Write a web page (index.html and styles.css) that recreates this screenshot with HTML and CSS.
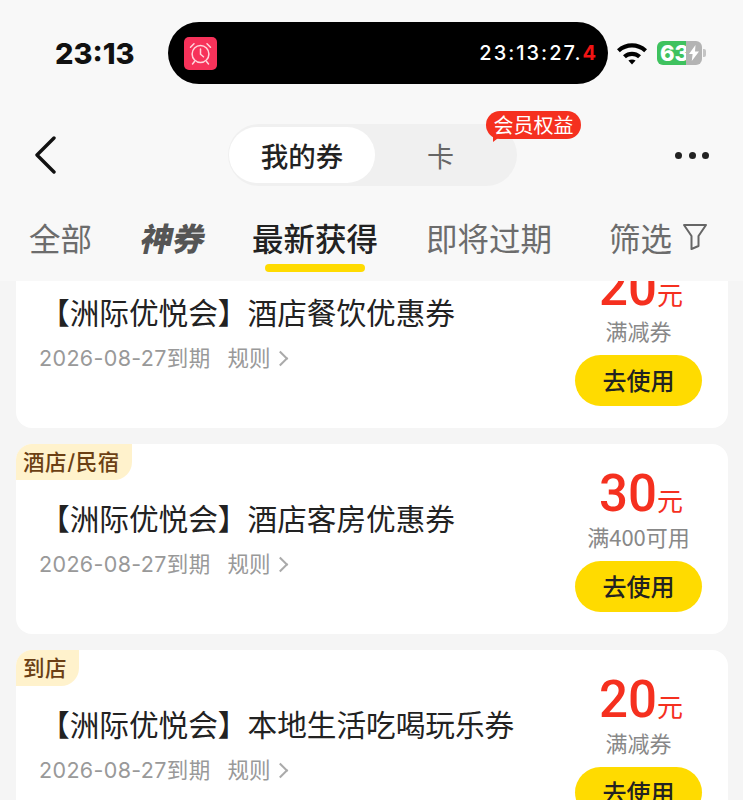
FILE: index.html
```html
<!DOCTYPE html>
<html lang="zh-CN">
<head>
  <meta charset="UTF-8" />
  <meta name="viewport" content="width=device-width, initial-scale=1" />
  <title>我的券</title>
  <link rel="stylesheet" href="styles.css">
</head>
<body>
  <div class="screen">
    <header class="top">
      <div class="status">
        <span class="status-time">23:13</span>
        <div class="island">
          <span class="alarm">
            <svg width="25" height="25" viewBox="0 0 25 25" fill="none" stroke="#ffd5dc" stroke-width="1.5" stroke-linecap="round">
              <circle cx="12.5" cy="13" r="8.4"/>
              <path d="M12.5 8v5.2l3 2.6"/>
              <path d="M2.5 6.2 6 2.8M22.5 6.2 19 2.8M6.5 20.5l-2 2.5M18.5 20.5l2 2.5"/>
            </svg>
          </span>
          <span class="island-time">23:13:27.<b>4</b></span>
        </div>
        <svg class="wifi" width="32" height="24" viewBox="0 0 32 24">
          <path d="M1 8.2C9.6.4 22.4.4 31 8.2l-2.8 3C21 5 11 5 3.8 11.2z" fill="#000"/>
          <path d="M7 14.2c5.4-4.6 12.6-4.6 18 0l-2.9 3c-3.8-3-8.4-3-12.2 0z" fill="#000"/>
          <path d="M12.4 19.6c2.2-1.6 5-1.6 7.2 0L16 23.4z" fill="#000"/>
        </svg>
        <div class="battery">
          <span class="battery-level">63</span>
          <span class="battery-rest">
            <svg width="10" height="16" viewBox="0 0 10 16"><path d="M6.5 0 0 9h3.6L2.8 16 10 6.4H6z" fill="#fff"/></svg>
          </span>
          <span class="battery-cap"></span>
        </div>
      </div>

      <nav class="nav">
        <svg class="back" width="26" height="38" viewBox="0 0 26 38" fill="none" stroke="#111" stroke-width="3.4" stroke-linecap="round" stroke-linejoin="round">
          <path d="M21 2 4 19l17 17"/>
        </svg>
        <div class="switch">
          <span class="switch-item active">我的券</span>
          <span class="switch-item">卡</span>
          <span class="perk">会员权益</span>
        </div>
        <div class="more"><i></i><i></i><i></i></div>
      </nav>

      <div class="tabs">
        <span class="tab">全部</span>
        <span class="tab special">神券</span>
        <span class="tab current">最新获得</span>
        <span class="tab">即将过期</span>
        <span class="tab filter">筛选
          <svg width="26" height="28" viewBox="0 0 26 28" fill="none" stroke="#666" stroke-width="2" stroke-linejoin="round">
            <path d="M2 2h22l-7.5 11v10l-7 3V13z"/>
          </svg>
        </span>
      </div>
    </header>

    <main class="list">
      <div class="cards">
        <section class="card">
          <div class="info">
            <h3>【洲际优悦会】酒店餐饮优惠券</h3>
            <p class="meta"><span>2026-08-27到期</span><span>规则</span><i class="chevron"></i></p>
          </div>
          <div class="side">
            <div class="amount">20<small>元</small></div>
            <div class="cond">满减券</div>
            <a class="use">去使用</a>
          </div>
        </section>

        <section class="card">
          <span class="tag">酒店/民宿</span>
          <div class="info">
            <h3>【洲际优悦会】酒店客房优惠券</h3>
            <p class="meta"><span>2026-08-27到期</span><span>规则</span><i class="chevron"></i></p>
          </div>
          <div class="side">
            <div class="amount">30<small>元</small></div>
            <div class="cond">满400可用</div>
            <a class="use">去使用</a>
          </div>
        </section>

        <section class="card">
          <span class="tag">到店</span>
          <div class="info">
            <h3>【洲际优悦会】本地生活吃喝玩乐券</h3>
            <p class="meta"><span>2026-08-27到期</span><span>规则</span><i class="chevron"></i></p>
          </div>
          <div class="side">
            <div class="amount">20<small>元</small></div>
            <div class="cond">满减券</div>
            <a class="use">去使用</a>
          </div>
        </section>
      </div>
    </main>
  </div>
</body>
</html>
```

FILE: styles.css
```css
* {
  box-sizing: border-box;
}

html, body {
  margin: 0;
  padding: 0;
}

body {
  font-family: "Noto Sans CJK SC", "Noto Sans", sans-serif;
  background: #f5f5f5;
  color: #222;
}

.screen {
  width: 743px;
  height: 800px;
  overflow: hidden;
  display: flex;
  flex-direction: column;
}

.top {
  height: 281px;
  flex: none;
  padding-top: 22px;
  background: #f8f8f8;
}

/* status bar */
.status {
  display: flex;
  align-items: center;
  height: 62px;
  padding-left: 55px;
}

.status-time {
  width: 113px;
  font: 800 29px Inter, sans-serif;
  color: #111;
}

.island {
  width: 440px;
  height: 62px;
  background: #000;
  border-radius: 31px;
  display: flex;
  align-items: center;
  justify-content: space-between;
  padding: 0 10px 0 16px;
}

.alarm {
  width: 33px;
  height: 33px;
  background: #f7325a;
  border-radius: 5px;
  display: flex;
  align-items: center;
  justify-content: center;
}

.island-time {
  font: 500 20px Inter, sans-serif;
  letter-spacing: 2px;
  color: #fff;
}

.island-time b {
  color: #f01414;
  font-weight: 700;
}

.wifi {
  margin-left: 8px;
}

.battery {
  display: flex;
  align-items: center;
  margin-left: 9px;
}

.battery-level {
  width: 29px;
  height: 24px;
  background: #3fc25f;
  border-radius: 6px 0 0 6px;
  color: #fff;
  font: 800 22px/24px Inter, sans-serif;
  padding-left: 3px;
  white-space: nowrap;
}

.battery-rest {
  width: 16px;
  height: 24px;
  background: #b4b4b4;
  border-radius: 0 6px 6px 0;
  display: flex;
  align-items: center;
  justify-content: center;
}

.battery-cap {
  width: 3px;
  height: 8px;
  margin-left: 1px;
  background: #c4c4c4;
  border-radius: 0 2px 2px 0;
}

/* nav */
.nav {
  display: flex;
  align-items: center;
  height: 62px;
  margin-top: 40px;
  padding: 0 34px 0 33px;
}

.back {
  flex: none;
}

.switch {
  display: flex;
  align-items: center;
  position: relative;
  width: 289px;
  height: 62px;
  margin-left: 169px;
  padding-left: 1px;
  background: #f0f0f0;
  border-radius: 31px;
}

.switch-item {
  width: 125px;
  margin-left: 3px;
  text-align: center;
  font-size: 27px;
  color: #666;
}

.switch-item.active {
  width: 146px;
  height: 56px;
  margin-left: 0;
  line-height: 56px;
  background: #fff;
  border-radius: 28px;
  color: #222;
  font-size: 27.5px;
  font-weight: 500;
}

.perk {
  position: absolute;
  top: -13px;
  left: 258px;
  width: 95px;
  height: 28px;
  background: #f5301f;
  border-radius: 14px;
  color: #fff;
  font-size: 20px;
  line-height: 28px;
  text-align: center;
}

.perk::after {
  content: "";
  position: absolute;
  left: 7px;
  bottom: -3px;
  width: 9px;
  height: 7px;
  background: #f5301f;
  clip-path: polygon(0 0, 100% 0, 0 100%);
}

.more {
  display: flex;
  gap: 6.5px;
  margin-left: auto;
}

.more i {
  width: 7px;
  height: 7px;
  border-radius: 50%;
  background: #222;
}

/* tabs */
.tabs {
  display: flex;
  align-items: center;
  gap: 48px;
  height: 54px;
  margin-top: 24px;
  padding: 0 35px 0 29px;
  font-size: 31.5px;
  color: #6c6c6c;
}

.tab {
  position: relative;
  white-space: nowrap;
  line-height: 54px;
}

.tab.special {
  font-size: 32px;
  font-weight: 900;
  transform: translateX(2px) skewX(-12deg);
  color: #555;
}

.tab.current {
  color: #222;
  font-weight: 500;
}

.tab.current::after {
  content: "";
  position: absolute;
  left: 13px;
  bottom: -8px;
  width: 100px;
  height: 8px;
  background: #ffdb00;
  border-radius: 4px;
}

.tab.filter {
  display: flex;
  align-items: center;
  gap: 10px;
  margin-left: auto;
}

/* coupon list */
.list {
  flex: 1;
  overflow: hidden;
  padding: 0 15px 0 16px;
}

.cards {
  display: flex;
  flex-direction: column;
  gap: 16px;
  margin-top: -43px;
}

.card {
  position: relative;
  flex: none;
  height: 190px;
  display: flex;
  background: #fff;
  border-radius: 16px;
}

.tag {
  position: absolute;
  top: 0;
  left: 0;
  height: 36px;
  padding: 0 12px 0 7px;
  background: #fff2cc;
  border-radius: 16px 0 18px 0;
  color: #6b3f14;
  font-family: Inter, "Noto Sans CJK SC", sans-serif;
  font-size: 21.5px;
  font-weight: 500;
  letter-spacing: 0.6px;
  line-height: 36px;
}

.info {
  flex: 1;
  padding: 51px 0 0 24px;
}

.info h3 {
  margin: 0;
  font-size: 29.65px;
  font-weight: 400;
  line-height: 46px;
  color: #222;
}

.meta {
  display: flex;
  align-items: center;
  margin: 0 0 0 -1px;
  padding-top: 8px;
  font-family: Inter, "Noto Sans CJK SC", sans-serif;
  font-size: 21.5px;
  line-height: 30px;
  color: #999;
}

.meta span:first-child {
  margin-right: 17px;
  letter-spacing: 0.35px;
}

.chevron {
  width: 11px;
  height: 11px;
  margin-left: 4px;
  border-top: 2px solid #aaa;
  border-right: 2px solid #aaa;
  transform: rotate(45deg);
}

.side {
  flex: none;
  width: 127px;
  margin-right: 26px;
  padding-top: 20px;
  display: flex;
  flex-direction: column;
  align-items: center;
}

.amount {
  height: 60px;
  padding-left: 5px;
  font: 500 51px/60px Roboto, sans-serif;
  color: #f5301f;
  white-space: nowrap;
}

.amount small {
  font: 400 26px "Noto Sans CJK SC", sans-serif;
}

.cond {
  margin-top: -2px;
  font-size: 22px;
  line-height: 28px;
  color: #888;
  white-space: nowrap;
}

.use {
  display: block;
  width: 127px;
  height: 51px;
  margin-top: 11px;
  background: #ffdb00;
  border-radius: 26px;
  text-align: center;
  font-size: 24px;
  font-weight: 500;
  line-height: 50px;
  color: #222;
}
```
